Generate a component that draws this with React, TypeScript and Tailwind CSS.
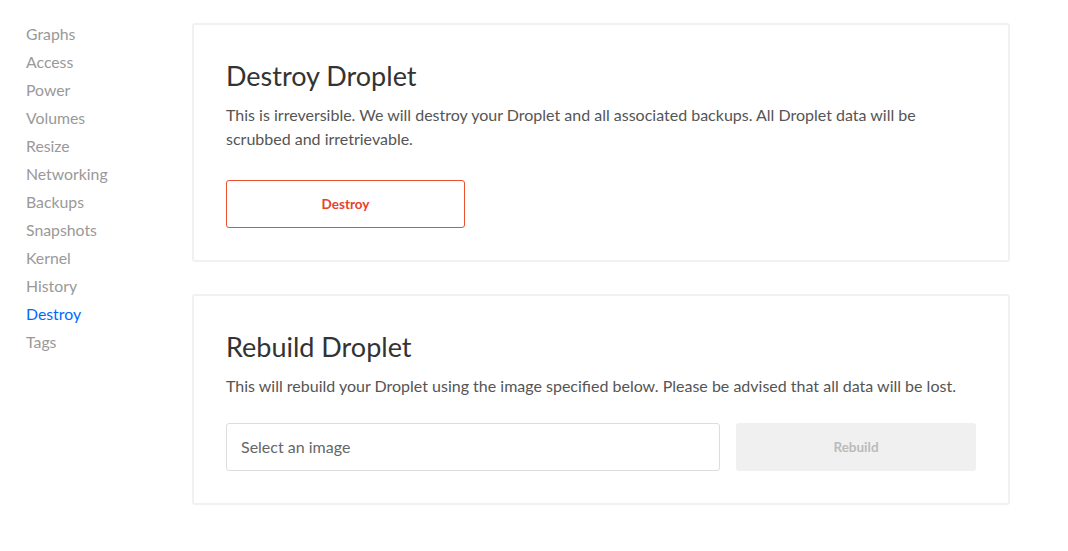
const navItems = [
  'Graphs',
  'Access',
  'Power',
  'Volumes',
  'Resize',
  'Networking',
  'Backups',
  'Snapshots',
  'Kernel',
  'History',
  'Destroy',
  'Tags',
];

const font = { fontFamily: 'Lato, "Open Sans", sans-serif' };

function Sidebar() {
  return (
    <nav className="w-[192px] shrink-0 pl-[26px] pt-[20px]">
      <ul>
        {navItems.map((item) => (
          <li
            key={item}
            className={
              'text-[15.8px] leading-[28px] ' +
              (item === 'Destroy' ? 'text-[#0069ff]' : 'text-[#999999]')
            }
          >
            {item}
          </li>
        ))}
      </ul>
    </nav>
  );
}

function Card({ children }: { children: React.ReactNode }) {
  return (
    <section className="w-[818px] rounded-[3px] border-2 border-[#f1f1f1] bg-white p-8">
      {children}
    </section>
  );
}

export default function App() {
  return (
    <div className="flex min-h-[551px] bg-white" style={font}>
      <Sidebar />
      <main className="flex flex-col gap-[32px] pt-[23px]">
        <Card>
          <h2 className="text-[27px] leading-[38px] text-[#333333]">Destroy Droplet</h2>
          <p className="mt-[8px] text-[16px] leading-[24px] text-[#555555]">
            This is irreversible. We will destroy your Droplet and all associated backups. All Droplet data will be
            scrubbed and irretrievable.
          </p>
          <button className="mt-[29px] h-12 w-[239px] rounded-[3px] border border-[#e8502f] text-[13.5px] font-bold text-[#e8412e]">
            Destroy
          </button>
        </Card>

        <Card>
          <h2 className="text-[27px] leading-[38px] text-[#333333]">Rebuild Droplet</h2>
          <p className="mt-[8px] text-[16px] leading-[24px] text-[#555555]">
            This will rebuild your Droplet using the image specified below. Please be advised that all data will be lost.
          </p>
          <div className="mt-[25px] flex gap-4">
            <div className="flex h-12 flex-1 items-center rounded-[3px] border border-[#dddddd] px-[14px] text-[16px] text-[#666666]">
              Select an image
            </div>
            <button className="h-12 w-[240px] rounded-[3px] bg-[#f0f0f0] text-[13.5px] font-bold text-[#bbbbbb]">
              Rebuild
            </button>
          </div>
        </Card>
      </main>
    </div>
  );
}
